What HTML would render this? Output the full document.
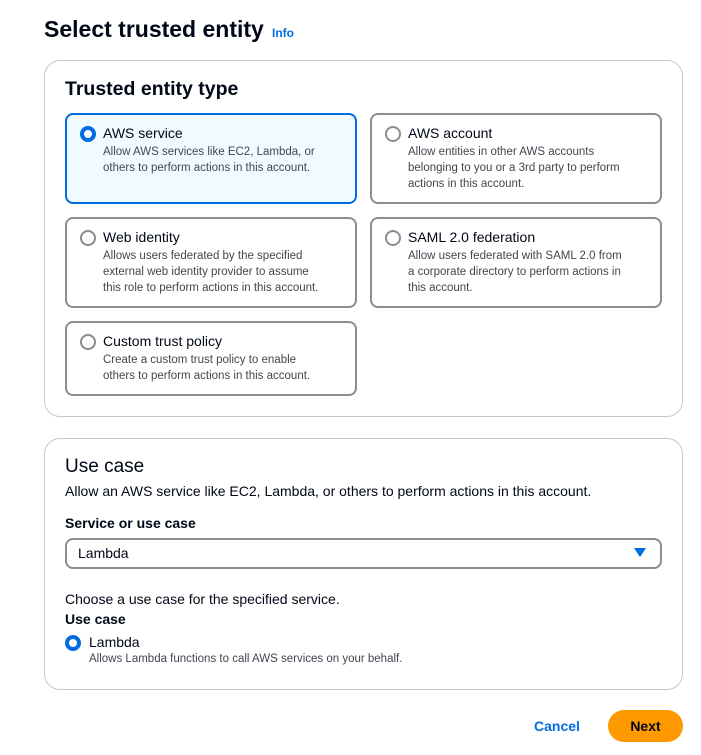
<!DOCTYPE html><html><head><style>
*{margin:0;padding:0;box-sizing:border-box}
body{width:701px;height:755px;background:#fff;font-family:"Liberation Sans",sans-serif;color:#000716;position:relative;overflow:hidden}
.a{position:absolute;white-space:nowrap}
.box{position:absolute;border:1px solid #c6c6cd;border-radius:16px;background:#fff}
.tile{position:absolute;border:2px solid #8c8c94;border-radius:8px;background:#fff}
.tile.sel{border-color:#006ce0;background:#f0fbff}
.r{position:absolute;left:13px;top:11px;width:16px;height:16px;border-radius:50%;border:2px solid #8c8c94;background:#fff}
.r.on{border:4px solid #006ce0}
.t{position:absolute;left:36px;top:10px;font-size:14px}
.d{position:absolute;left:36px;top:29px;font-size:11.5px;line-height:16px;color:#424650;white-space:nowrap}
</style></head><body>
<div class="a" style="left:44px;top:16px;font-size:23px;font-weight:bold">Select trusted entity</div>
<div class="a" style="left:272px;top:26px;font-size:12px;font-weight:bold;color:#006ce0">Info</div>
<div class="box" style="left:44px;top:60px;width:639px;height:357px"></div>
<div class="a" style="left:65px;top:78px;font-size:19.5px;font-weight:bold">Trusted entity type</div>
<div class="tile sel" style="left:65px;top:113px;width:292px;height:91px"><div class="r on"></div><div class="t">AWS service</div><div class="d">Allow AWS services like EC2, Lambda, or<br>others to perform actions in this account.</div></div>
<div class="tile" style="left:370px;top:113px;width:292px;height:91px"><div class="r"></div><div class="t">AWS account</div><div class="d">Allow entities in other AWS accounts<br>belonging to you or a 3rd party to perform<br>actions in this account.</div></div>
<div class="tile" style="left:65px;top:217px;width:292px;height:91px"><div class="r"></div><div class="t">Web identity</div><div class="d">Allows users federated by the specified<br>external web identity provider to assume<br>this role to perform actions in this account.</div></div>
<div class="tile" style="left:370px;top:217px;width:292px;height:91px"><div class="r"></div><div class="t">SAML 2.0 federation</div><div class="d">Allow users federated with SAML 2.0 from<br>a corporate directory to perform actions in<br>this account.</div></div>
<div class="tile" style="left:65px;top:321px;width:292px;height:75px"><div class="r"></div><div class="t">Custom trust policy</div><div class="d">Create a custom trust policy to enable<br>others to perform actions in this account.</div></div>
<div class="box" style="left:44px;top:438px;width:639px;height:252px"></div>
<div class="a" style="left:65px;top:456px;font-size:19px">Use case</div>
<div class="a" style="left:65px;top:483px;font-size:14px">Allow an AWS service like EC2, Lambda, or others to perform actions in this account.</div>
<div class="a" style="left:65px;top:515px;font-size:14px;font-weight:bold">Service or use case</div>
<div style="position:absolute;left:65px;top:538px;width:597px;height:31px;border:2px solid #8c8c94;border-radius:8px"></div>
<div class="a" style="left:78px;top:545px;font-size:14px">Lambda</div>
<div class="a" style="left:634px;top:548px;width:0;height:0;border-left:6px solid transparent;border-right:6px solid transparent;border-top:9px solid #006ce0"></div>
<div class="a" style="left:65px;top:591px;font-size:14px">Choose a use case for the specified service.</div>
<div class="a" style="left:65px;top:611px;font-size:14px;font-weight:bold">Use case</div>
<div class="a" style="left:65px;top:635px;width:16px;height:16px;border-radius:50%;border:4px solid #006ce0"></div>
<div class="a" style="left:89px;top:634px;font-size:14px">Lambda</div>
<div class="a" style="left:89px;top:653px;font-size:11.5px;color:#424650">Allows Lambda functions to call AWS services on your behalf.</div>
<div class="a" style="left:534px;top:718px;font-size:14px;font-weight:bold;color:#006ce0">Cancel</div>
<div class="a" style="left:608px;top:710px;width:75px;height:32px;border-radius:16px;background:#ff9900;font-size:14px;font-weight:bold;text-align:center;line-height:32px">Next</div>
</body></html>
